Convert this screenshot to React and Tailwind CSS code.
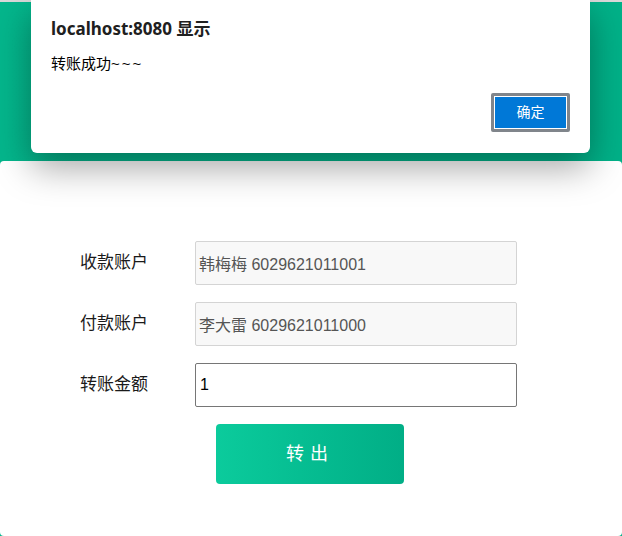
import React, { useState } from 'react';

const cjk = { fontFamily: '"Liberation Sans", "Noto Sans CJK SC", sans-serif' };

const Row = ({ label, children }) => (
  <div className="flex items-center pl-[80px]">
    <div className="w-[115px] text-[17px] text-[#1a1a1a]">{label}</div>
    {children}
  </div>
);

const App = () => {
  const [amount, setAmount] = useState('1');

  return (
    <div className="relative h-[536px] overflow-hidden bg-gradient-to-r from-[#04b68c] to-[#00b188]" style={cjk}>
      <div className="h-[2px] bg-[#d9d9d9]" />
      <div className="h-[159px]" />

      {/* transfer form */}
      <div className="h-[375px] rounded-[4px] bg-white pt-[80px]">
        <div className="flex flex-col gap-[17px]">
          <Row label="收款账户">
            <input
              readOnly
              value="韩梅梅 6029621011001"
              className="h-[44px] w-[322px] rounded-[2px] border border-[#d4d4d4] bg-[#f8f8f8] px-[3px] text-[16px] text-[#555] outline-none"
            />
          </Row>
          <Row label="付款账户">
            <input
              readOnly
              value="李大雷 6029621011000"
              className="h-[44px] w-[322px] rounded-[2px] border border-[#d4d4d4] bg-[#f8f8f8] px-[3px] text-[16px] text-[#555] outline-none"
            />
          </Row>
          <Row label="转账金额">
            <input
              value={amount}
              onChange={e => setAmount(e.target.value)}
              className="h-[44px] w-[322px] rounded-[2px] border border-[#767676] bg-white px-[4px] text-[16px] text-black outline-none"
            />
          </Row>
        </div>
        <button className="ml-[216px] mt-[17px] block h-[60px] w-[188px] rounded-[4px] bg-gradient-to-r from-[#0bcb9c] to-[#01ae86] text-[18px] tracking-[6px] text-white">
          转出
        </button>
      </div>

      {/* alert dialog */}
      <div className="absolute left-[31px] top-0 h-[153px] w-[559px] rounded-b-[6px] bg-white shadow-[0_14px_36px_rgba(0,0,0,0.36)]">
        <div className="pl-[20px] pt-[16px] text-[17px] font-bold text-[#202020]" style={{ fontFamily: '"Noto Sans", "Noto Sans CJK SC", sans-serif' }}>
          localhost:8080 显示
        </div>
        <div className="mt-[11px] pl-[20px] text-[15px] text-black">
          转账成功<span className="tracking-[2px]">~~~</span>
        </div>
        <div className="absolute right-[20px] top-[93px] rounded-[2px] border-[3px] border-[#80858b] bg-white p-[1px]">
          <button className="block h-[31px] w-[71px] bg-[#0078d7] text-[14px] text-white">确定</button>
        </div>
      </div>
    </div>
  );
};

export default App;
